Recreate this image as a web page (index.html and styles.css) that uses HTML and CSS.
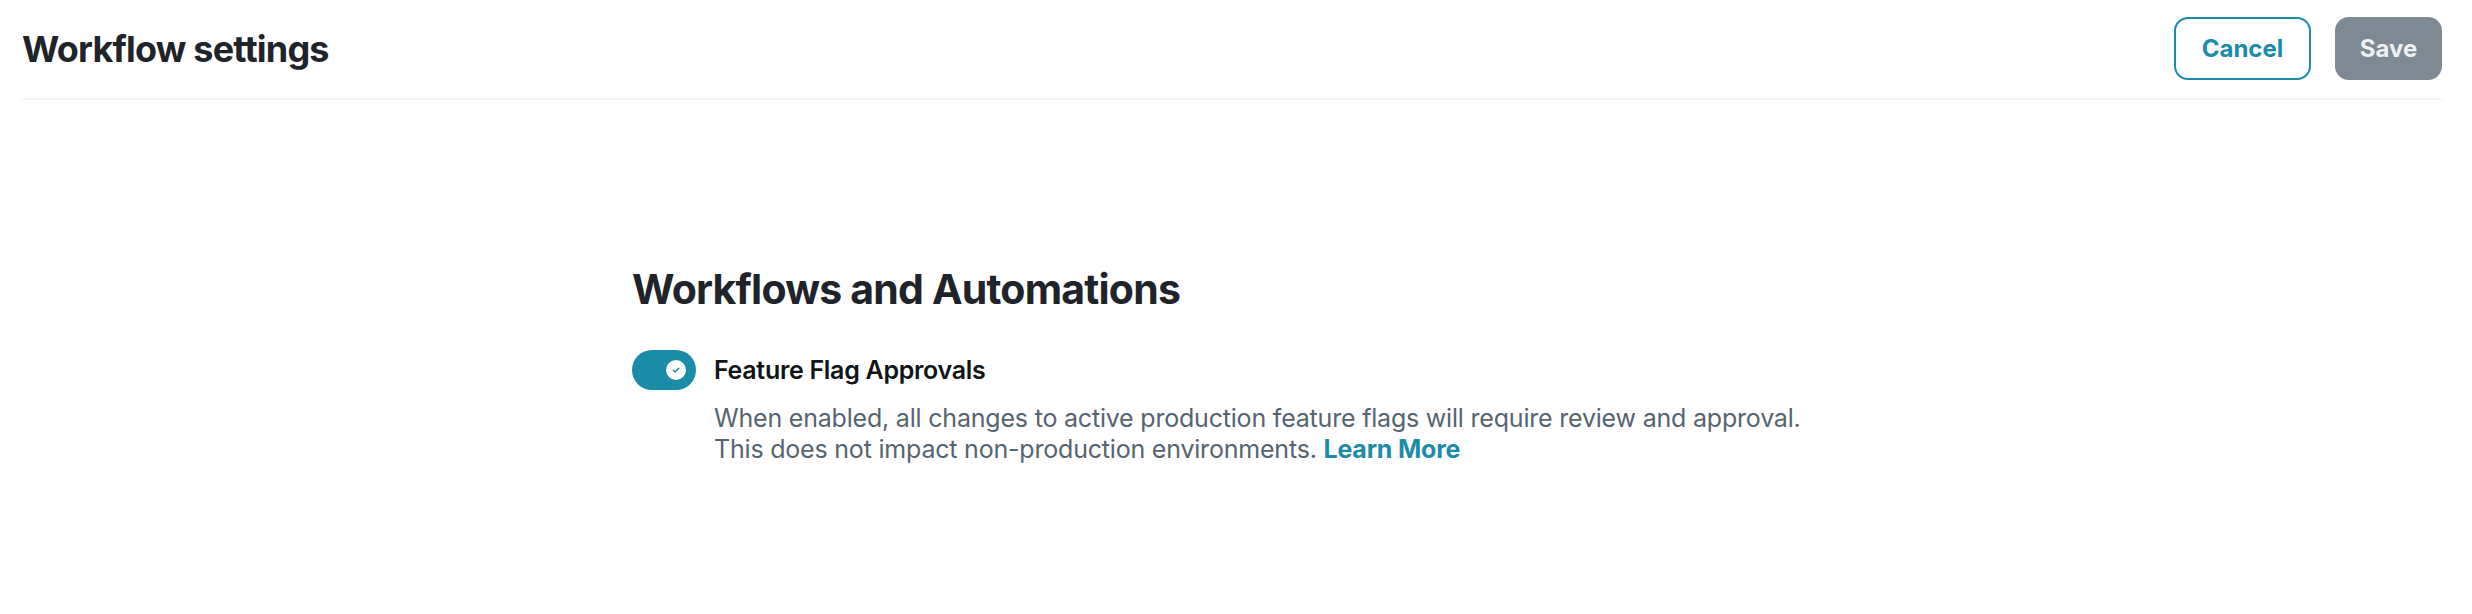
FILE: index.html
```html
<!DOCTYPE html>
<html lang="en">
<head>
<meta charset="utf-8">
<title>Workflow settings</title>
<link rel="stylesheet" href="styles.css">
</head>
<body>
<header class="page-header">
  <h1 class="page-title">Workflow settings</h1>
  <div class="actions">
    <button class="btn btn-outline" type="button">Cancel</button>
    <button class="btn btn-disabled" type="button" disabled>Save</button>
  </div>
</header>
<main class="content">
  <section class="section">
    <h2 class="section-title">Workflows and Automations</h2>
    <div class="setting">
      <div class="setting-row">
        <span class="toggle" role="switch" aria-checked="true">
          <span class="knob">
            <svg width="10" height="10" viewBox="0 0 10 10" aria-hidden="true"><path d="M2.3 5.2 L4.2 7 L7.8 3.2" fill="none" stroke="#1a8ca8" stroke-width="1.5" stroke-linecap="round" stroke-linejoin="round"/></svg>
          </span>
        </span>
        <span class="setting-label">Feature Flag Approvals</span>
      </div>
      <p class="setting-desc">When enabled, all changes to active production feature flags will require review and approval.<br>This does not impact non-production environments. <a class="link" href="#">Learn More</a></p>
    </div>
  </section>
</main>
</body>
</html>
```
FILE: styles.css
```css
* { box-sizing: border-box; }
html, body { margin: 0; padding: 0; background: #ffffff; }
body {
  font-family: Inter, "Liberation Sans", Arial, sans-serif;
  color: #1e2429;
}
.page-header {
  display: flex;
  align-items: center;
  justify-content: space-between;
  margin: 0 30px 0 22px;
  padding: 17px 0 18px;
  border-bottom: 2px solid #f4f5f6;
}
.page-title {
  margin: 0;
  font-size: 36px;
  font-weight: 700;
  letter-spacing: -0.8px;
  color: #1e2429;
  line-height: 1;
}
.actions {
  display: flex;
  gap: 24px;
}
.btn {
  height: 63px;
  border-radius: 14px;
  font-family: inherit;
  font-size: 24px;
  font-weight: 700;
  padding: 0;
  cursor: pointer;
}
.btn-outline {
  width: 137px;
  background: #ffffff;
  border: 2px solid #1a8ca8;
  color: #1a8ca8;
}
.btn-disabled {
  width: 107px;
  background: #7e8993;
  border: none;
  color: #eef0f2;
}
.content {
  display: flex;
  justify-content: center;
  padding-top: 169px;
}
.section {
  width: 1208px;
}
.section-title {
  margin: 0 0 40px;
  font-size: 41px;
  font-weight: 700;
  letter-spacing: -0.8px;
  line-height: 1;
  color: #1e2429;
}
.setting-row {
  display: flex;
  align-items: center;
  gap: 18px;
}
.toggle {
  display: flex;
  align-items: center;
  justify-content: flex-end;
  width: 64px;
  height: 40px;
  border-radius: 20px;
  background: #1a8ca8;
  padding-right: 10px;
}
.knob {
  display: flex;
  align-items: center;
  justify-content: center;
  width: 20px;
  height: 20px;
  border-radius: 50%;
  background: #ffffff;
}
.setting-label {
  font-size: 25px;
  font-weight: 600;
  letter-spacing: -0.3px;
  color: #111417;
}
.setting-desc {
  margin: 13px 0 0 82px;
  font-size: 25px;
  line-height: 31px;
  color: #56646f;
  letter-spacing: -0.2px;
}
.link {
  color: #1a8ca8;
  font-weight: 700;
  text-decoration: none;
}
```
